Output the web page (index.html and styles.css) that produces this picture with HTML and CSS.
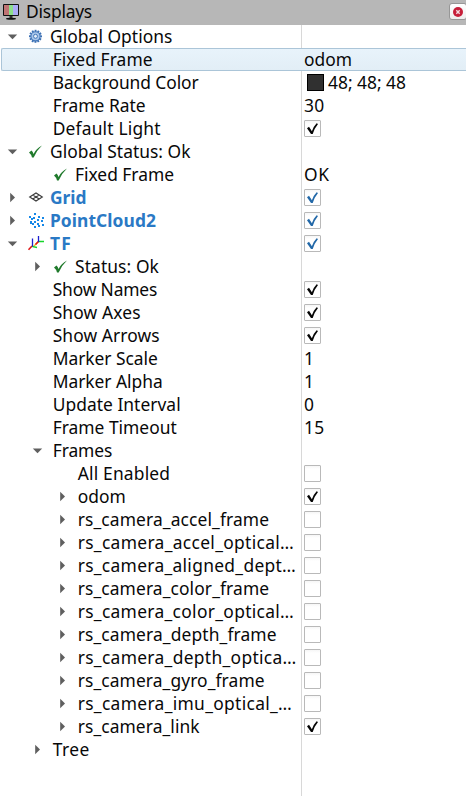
FILE: index.html
```html
<!DOCTYPE html>
<html lang="en">
<head>
<meta charset="utf-8">
<title>Displays</title>
<link rel="stylesheet" href="styles.css">
</head>
<body>
<div class="panel">
  <header class="titlebar">
    <svg class="monitor" width="18" height="18" viewBox="0 0 18 18">
      <rect x="0" y="1" width="16" height="12" rx="1" fill="#111"/>
      <rect x="1" y="2" width="5" height="10" fill="#c07474"/><rect x="6" y="2" width="4" height="10" fill="#8ce08c"/><rect x="10" y="2" width="5" height="10" fill="#acacf6"/>
      <rect x="6.500" y="13" width="3" height="2" fill="#333"/><ellipse cx="8" cy="15.800" rx="5" ry="1" fill="#111"/>
    </svg>
    <span class="title" data-width="66">Displays</span>
    <button class="close" aria-label="Close"><svg width="10" height="10" viewBox="0 0 10 10"><circle cx="5" cy="5" r="5" fill="#c61f3a"/><path d="M3.300 3.300l3.400 3.400M6.700 3.300l-3.400 3.400" stroke="#f6dce0" stroke-width="1.400"/></svg></button>
  </header>
  <main class="tree" id="tree"></main>
</div>
<script src="tree.js"></script>
</body>
</html>
```
FILE: styles.css
```css
body {
  margin: 0;
  background: #fff;
  color: #080808;
  font-family: "Noto Sans", sans-serif;
  font-size: 17.4px;
  line-height: 23px;
}
.panel {
  height: 796px;
  overflow: hidden;
  display: flex;
  flex-direction: column;
}
.titlebar {
  box-sizing: border-box;
  height: 25px;
  flex: none;
  display: flex;
  align-items: center;
  padding-left: 3px;
  background: #b7b7b7;
  white-space: nowrap;
}
.monitor { flex: none; margin: 0 3px 1px 0; }
.title { margin-top: -2px; padding-left: 2px; margin-right: auto; }
.close {
  box-sizing: border-box;
  width: 18px;
  height: 17px;
  flex: none;
  margin: 0 -1px 2px 0;
  padding: 0;
  display: flex;
  align-items: center;
  justify-content: center;
  border: 1px solid #979797;
  border-radius: 3px;
  background: linear-gradient(#fff, #eee);
}
.tree {
  flex: 1;
  background: linear-gradient(#d8d8d8, #d8d8d8) 301px 0 / 1px 100% no-repeat;
}
.row {
  display: grid;
  grid-template-columns: 304px 1fr;
  height: 23px;
}
.row.selected {
  box-sizing: border-box;
  margin-left: 1px;
  grid-template-columns: 302px 1fr;
  border: solid #abc5d8;
  border-width: 1px 0 1px 1px;
  border-radius: 2px 0 0 2px;
  background: linear-gradient(#e8f3fb, #e2eef6);
  line-height: 21px;
}
.row.selected .name { margin-left: -2px; }
.name, .value { display: flex; align-items: center; white-space: nowrap; min-width: 0; }
.level1 { padding-left: 25px; }
.level2 { padding-left: 50px; }
.arrow { width: 25px; height: 23px; flex: none; }
.selected .arrow { height: 21px; }
.icon { width: 25px; height: 23px; flex: none; }
.label.plain { margin-left: 2.7px; }
.display { font-weight: bold; color: #2a79c5; }
.box {
  box-sizing: border-box;
  width: 17px;
  height: 17px;
  border: 1px solid #b9b9b9;
  border-radius: 1px;
  background: linear-gradient(#f6f6f6, #fff 3px);
  color: #050505;
}
.box.blue { color: #2268a8; }
.box svg { display: block; }
.swatch {
  box-sizing: border-box;
  width: 17px;
  height: 17px;
  margin: 0 4px 0 3px;
  border: 1px solid #000;
  background: #303030;
}
```
FILE: tree.js
```js
const CHECK = '<path d="M4 12.500L6.500 10.500Q8 11.500 8.500 14Q11 8.500 17 5.500Q11.500 10.500 8.700 17.500H7Q6 14 4 12.500Z" fill="#207a2c"/>';

function gear() {
  let teeth = '';
  for (let i = 0; i < 12; i++) {
    teeth += `<rect x="9.600" y="4.800" width="1.900" height="3" fill="#3c70b4" transform="rotate(${i * 30} 10.500 11.300)"/>`;
  }
  return teeth + '<circle cx="10.500" cy="11.300" r="4.600" fill="#a9c6ea" stroke="#4478b9" stroke-width="1.100"/><circle cx="10.500" cy="11.300" r="2" fill="#e6eff9" stroke="#4478b9"/>';
}

function points() {
  const xy = [[9,4],[4,7],[8,8],[13,7],[17,8],[6,9],[12,10],[16,11],[5,13],[9,12],[7,14],[12,14],[17,15],[13,16],[9,17],[5,12]];
  return xy.map(([x, y]) => `<rect x="${x}" y="${y}" width="2" height="2" fill="#1688e8"/>`).join('');
}

const ICONS = {
  gear: gear(),
  check: CHECK,
  grid: '<path d="M4.700 11L11 7L17.300 11L11 15ZM7.800 9L14.200 13M14.200 9L7.800 13" fill="none" stroke="#3c3c3c" stroke-width="1.150"/>',
  points: points(),
  tf: '<g fill="none" stroke-width="1.300"><path d="M13.500 9.500L8 15" stroke="#f3c51c"/><path d="M13.500 9.500L10.500 12.500M7 14L3.500 17.700" stroke="#e01818" stroke-width="1.600"/><path d="M13.500 9.500H19M7 14.300L12 15.500" stroke="#16d52b"/><path d="M13.500 10V4M7.500 14.500V6.500" stroke="#1c20d0"/></g>'
};

// level, arrow (open / shut / none), icon, label, label width, value, value width
const ROWS = [
  [0, 'open', 'gear', 'Global Options', 122.5],
  [1, '', '', 'Fixed Frame', 100, 'odom', 48],
  [1, '', '', 'Background Color', 146, '48; 48; 48', 78, 'swatch'],
  [1, '', '', 'Frame Rate', 93, '30', 20.5],
  [1, '', '', 'Default Light', 108, true],
  [0, 'open', 'check', 'Global Status: Ok', 140.5],
  [1, '', 'check', 'Fixed Frame', 99, 'OK', 25.5],
  [0, 'shut', 'grid', 'Grid', 36.5, true, 0, 'blue'],
  [0, 'shut', 'points', 'PointCloud2', 106, true, 0, 'blue'],
  [0, 'open', 'tf', 'TF', 22, true, 0, 'blue'],
  [1, 'shut', 'check', 'Status: Ok', 84],
  [1, '', '', 'Show Names', 104.5, true],
  [1, '', '', 'Show Axes', 88, true],
  [1, '', '', 'Show Arrows', 107, true],
  [1, '', '', 'Marker Scale', 105, '1', 10],
  [1, '', '', 'Marker Alpha', 110, '1', 10],
  [1, '', '', 'Update Interval', 128, '0', 10],
  [1, '', '', 'Frame Timeout', 124, '15', 20.5],
  [1, 'open', '', 'Frames', 59.5],
  [2, '', '', 'All Enabled', 92.5, false],
  [2, 'shut', '', 'odom', 48, true],
  [2, 'shut', '', 'rs_camera_accel_frame', 191.5, false],
  [2, 'shut', '', 'rs_camera_accel_optical…', 216.5, false],
  [2, 'shut', '', 'rs_camera_aligned_dept…', 218.5, false],
  [2, 'shut', '', 'rs_camera_color_frame', 191.5, false],
  [2, 'shut', '', 'rs_camera_color_optical…', 216.5, false],
  [2, 'shut', '', 'rs_camera_depth_frame', 199, false],
  [2, 'shut', '', 'rs_camera_depth_optica…', 219, false],
  [2, 'shut', '', 'rs_camera_gyro_frame', 187, false],
  [2, 'shut', '', 'rs_camera_imu_optical_…', 214.5, false],
  [2, 'shut', '', 'rs_camera_link', 122, true],
  [1, 'shut', '', 'Tree', 37]
];

const ARROWS = { open: 'M7.800 9.500H17.200L12.500 14.300Z', shut: 'M10.200 6.800V16.200L15 11.500Z' };

function rowHtml([level, arrow, icon, label, width, value, valueWidth, kind]) {
  const arrowHtml = `<svg class="arrow" viewBox="0 0 25 23">${arrow ? `<path d="${ARROWS[arrow]}" fill="#5f5f5f"/>` : ''}</svg>`;
  const iconHtml = icon ? `<svg class="icon" viewBox="0 0 25 23">${ICONS[icon]}</svg>` : '';
  let valueHtml = '';
  if (typeof value === 'boolean') {
    const tick = value ? '<svg width="15" height="15" viewBox="0 0 15 15"><path d="M2 7.200L4 5.800L6.900 10.200Q8.600 5.400 11.600 2.300L13 3Q9.400 7.400 7.700 13H6Z" fill="currentColor"/></svg>' : '';
    valueHtml = `<span class="box ${kind || ''}">${tick}</span>`;
  } else if (value) {
    valueHtml = (kind === 'swatch' ? '<span class="swatch"></span>' : '') + `<span data-width="${valueWidth}">${value}</span>`;
  }
  return `<div class="row${value === 'odom' ? ' selected' : ''}">
    <div class="name level${level}">${arrowHtml}${iconHtml}<span class="label${icon ? '' : ' plain'}${kind === 'blue' ? ' display' : ''}" data-width="${width}">${label}</span></div>
    <div class="value">${valueHtml}</div></div>`;
}

document.getElementById('tree').innerHTML = ROWS.map(rowHtml).join('');

document.querySelectorAll('[data-width]').forEach(el => {
  const pad = parseFloat(getComputedStyle(el).paddingLeft);
  const natural = el.getBoundingClientRect().width - pad;
  el.style.letterSpacing = (el.dataset.width - natural) / el.textContent.length + 'px';
});
```
